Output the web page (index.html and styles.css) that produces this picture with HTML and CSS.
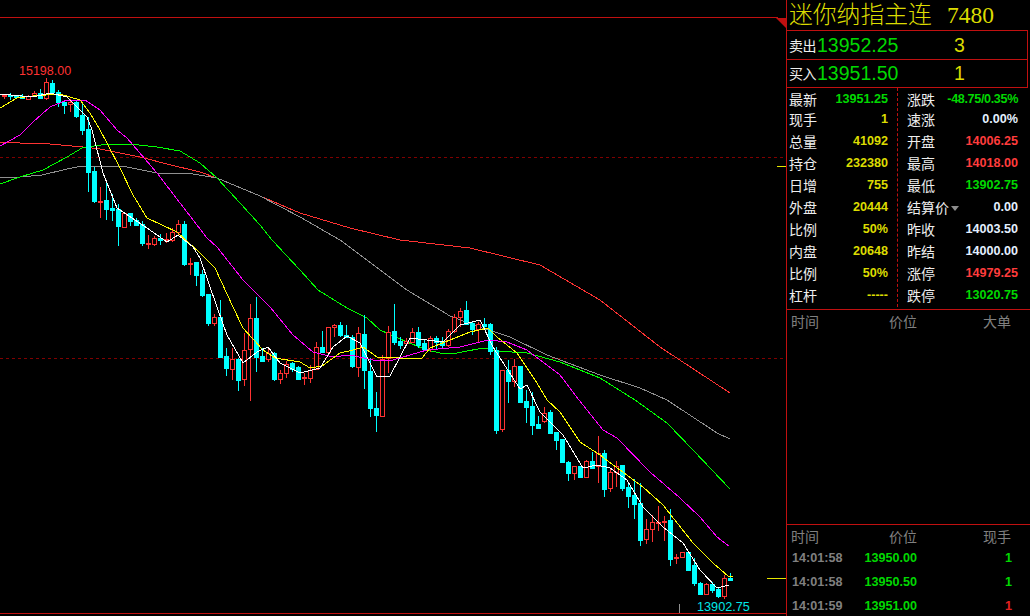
FILE: index.html
```html
<!DOCTYPE html>
<html lang="zh">
<head>
<meta charset="utf-8">
<title>迷你纳指主连</title>
<link rel="stylesheet" href="styles.css">
</head>
<body>
<div class="app">
  <section class="chart">
    <svg id="kline" class="kline" width="786" height="616" viewBox="0 0 786 616">
      <line class="frame" x1="0" y1="17.5" x2="778" y2="17.5"/>
      <polygon class="corner" points="776,18 786,18 786,28"/>
      <line class="grid" x1="0" y1="157.5" x2="786" y2="157.5"/>
      <line class="grid" x1="0" y1="358.5" x2="786" y2="358.5"/>
      <line class="frame" x1="0" y1="613.5" x2="786" y2="613.5"/>
      <line class="tick" x1="777" y1="166.5" x2="786" y2="166.5"/>
      <line class="tick" x1="767" y1="578.5" x2="786" y2="578.5"/>
      <line class="mark" x1="679.5" y1="604" x2="679.5" y2="613"/>
      <text class="hi-label" x="19" y="75">15198.00</text>
      <text class="lo-label" x="697" y="611">13902.75</text>
    </svg>
  </section>
  <aside class="panel">
    <header class="title"><span class="name">迷你纳指主连</span><span class="code">7480</span></header>
    <div class="quote">
      <div class="quote-row"><span class="quote-label">卖出</span><span class="quote-price">13952.25</span><span class="quote-vol">3</span></div>
      <div class="quote-row"><span class="quote-label">买入</span><span class="quote-price">13951.50</span><span class="quote-vol">1</span></div>
    </div>
    <div class="stats">
      <div class="stat-col left">
        <div class="stat"><span>最新</span><b class="green">13951.25</b></div>
        <div class="stat"><span>现手</span><b class="yellow">1</b></div>
        <div class="stat"><span>总量</span><b class="yellow">41092</b></div>
        <div class="stat"><span>持仓</span><b class="yellow">232380</b></div>
        <div class="stat"><span>日增</span><b class="yellow">755</b></div>
        <div class="stat"><span>外盘</span><b class="yellow">20444</b></div>
        <div class="stat"><span>比例</span><b class="yellow">50%</b></div>
        <div class="stat"><span>内盘</span><b class="yellow">20648</b></div>
        <div class="stat"><span>比例</span><b class="yellow">50%</b></div>
        <div class="stat"><span>杠杆</span><b class="yellow">-----</b></div>
      </div>
      <div class="stat-col right">
        <div class="stat"><span>涨跌</span><b class="green tight">-48.75/0.35%</b></div>
        <div class="stat"><span>速涨</span><b class="pale">0.00%</b></div>
        <div class="stat"><span>开盘</span><b class="red">14006.25</b></div>
        <div class="stat"><span>最高</span><b class="red">14018.00</b></div>
        <div class="stat"><span>最低</span><b class="green">13902.75</b></div>
        <div class="stat"><span class="with-caret">结算价<i class="caret"></i></span><b class="pale">0.00</b></div>
        <div class="stat"><span>昨收</span><b class="pale">14003.50</b></div>
        <div class="stat"><span>昨结</span><b class="pale">14000.00</b></div>
        <div class="stat"><span>涨停</span><b class="red">14979.25</b></div>
        <div class="stat"><span>跌停</span><b class="green">13020.75</b></div>
      </div>
    </div>
    <div class="big-orders">
      <div class="list-head"><span>时间</span><span class="num">价位</span><span class="num">大单</span></div>
    </div>
    <div class="ticks">
      <div class="list-head"><span>时间</span><span class="num">价位</span><span class="num">现手</span></div>
      <div class="tick-row"><span class="time">14:01:58</span><b class="num green">13950.00</b><b class="num green">1</b></div>
      <div class="tick-row"><span class="time">14:01:58</span><b class="num green">13950.50</b><b class="num green">1</b></div>
      <div class="tick-row"><span class="time">14:01:59</span><b class="num green">13951.00</b><b class="num red-dark">1</b></div>
    </div>
  </aside>
</div>
<script src="chart.js"></script>
</body>
</html>
```

FILE: styles.css
```css
* { box-sizing: border-box; }
html, body { margin: 0; padding: 0; background: #000; overflow: hidden; }
body { font-family: "Liberation Sans", "Noto Sans CJK SC", sans-serif; color: #eee; }
.app { display: flex; width: 1030px; height: 616px; background: #000; }
.chart { width: 786px; height: 616px; flex: none; }
.kline { display: block; }

.frame { stroke: #c01010; stroke-width: 1; shape-rendering: crispEdges; }
.corner { fill: #c01010; }
.grid { stroke: #800000; stroke-width: 1; stroke-dasharray: 3 3; shape-rendering: crispEdges; }
.tick { stroke: #e6e600; stroke-width: 1; shape-rendering: crispEdges; }
.mark { stroke: #909090; stroke-width: 1; shape-rendering: crispEdges; }
.hi-label { font: 12.5px "Liberation Sans", sans-serif; fill: #ff3232; }
.lo-label { font: 12.7px "Liberation Sans", sans-serif; fill: #00e8e8; }

.ma { fill: none; stroke-width: 1; shape-rendering: crispEdges; }
.ma-white { stroke: #ffffff; }
.ma-yellow { stroke: #ffff00; }
.ma-magenta { stroke: #ff00ff; }
.ma-green { stroke: #00ff00; }
.ma-gray { stroke: #909090; }
.ma-red { stroke: #ff3232; }
.wick-up, .doji { fill: #ff3232; }
.wick-down, .body-down { fill: #00ffff; }
.body-up { fill: #000; stroke: #ff3232; stroke-width: 1; shape-rendering: crispEdges; }
.kline rect { shape-rendering: crispEdges; }

.panel { width: 244px; height: 616px; flex: none; border-left: 1px solid #c01010; display: flex; flex-direction: column; }
.title { height: 30px; flex: none; padding-left: 2px; display: flex; align-items: center; color: #dcdc00; white-space: nowrap; }
.name { font: 300 23.8px/30px "Liberation Sans", "Noto Sans CJK SC", sans-serif; width: 158px; }
.code { font: 23.5px/30px "Liberation Serif", serif; }
.quote { height: 58px; flex: none; margin-right: 2px; border: 1px solid #c01010; border-left: 0; display: flex; flex-direction: column; }
.quote-row { flex: 1; display: grid; grid-template-columns: 28px 110px 1fr; padding-left: 2px; align-items: center; }
.quote-row + .quote-row { border-top: 1px solid #c01010; }
.quote-label { font: 14px/20px "Noto Sans CJK SC", sans-serif; color: #eee; white-space: nowrap; letter-spacing: -0.5px; }
.quote-price { font: 19.5px/24px "Liberation Sans", sans-serif; color: #00d800; }
.quote-vol { font: 19.5px/24px "Liberation Sans", sans-serif; color: #dcdc00; padding-left: 27px; }

.stats { height: 222px; flex: none; display: grid; grid-template-columns: 111px 1fr; border-bottom: 1px solid #c01010; }
.stat-col { display: flex; flex-direction: column; height: 219px; }
.stat-col.left { padding: 0 9px 0 2px; border-right: 1px dashed #c01010; }
.stat-col.right { padding: 0 12px 0 9px; }
.stat { height: 22px; flex: none; display: flex; justify-content: space-between; align-items: center; }
.stat:first-child { height: 20px; padding-top: 1px; }
.stat span { font: 14px/20px "Noto Sans CJK SC", sans-serif; color: #eee; white-space: nowrap; }
.stat b { font: bold 12.6px/20px "Liberation Sans", sans-serif; white-space: nowrap; }
.stat b.tight { letter-spacing: -0.35px; }
.with-caret { display: flex; align-items: center; }
.caret { display: block; width: 0; height: 0; margin: 3px 0 0 2px; border-left: 4.5px solid transparent; border-right: 4.5px solid transparent; border-top: 5px solid #8c8c8c; }
.green { color: #00d800; }
.yellow { color: #dcdc00; }
.red { color: #ff3c3c; }
.red-dark { color: #e02020; }
.pale { color: #e4f0ff; }

.big-orders { flex: 1; }
.list-head { height: 21px; display: grid; grid-template-columns: 73px 53px 1fr; padding: 0 19px 0 4px; align-items: center; font: 14px/20px "Noto Sans CJK SC", sans-serif; color: #808080; }
.ticks { height: 92px; flex: none; border-top: 1px solid #c01010; }
.tick-row { height: 24px; display: grid; grid-template-columns: 72px 53px 1fr; padding: 0 18px 0 5px; align-items: center; font: bold 12.6px/24px "Liberation Sans", sans-serif; }
.time { color: #808080; }
.num { text-align: right; }
```

FILE: chart.js
```js
(function () {
  var NS = "http://www.w3.org/2000/svg";
  var svg = document.getElementById("kline");
  function el(name, attrs) {
    var n = document.createElementNS(NS, name);
    for (var k in attrs) n.setAttribute(k, attrs[k]);
    svg.appendChild(n);
  }
  // [top, bottom, high, low, rising]; x = 4 + 6 * index
  var c = [
    [95,96,94,99,1],[95,96,93,100,0],[96,97,95,98,0],[96,98,94,99,0],[96,99,95,99,1],[93,96,91,97,1],
    [93,98,89,98,0],[82,98,78,100,1],[83,92,80,94,0],[92,102,90,107,0],[102,105,100,114,0],[102,104,99,112,1],
    [102,116,100,118,0],[115,130,103,135,0],[129,172,117,192,0],[171,201,167,203,0],[201,202,187,218,1],[200,209,183,220,0],
    [208,210,194,221,0],[209,226,204,246,0],[213,227,213,227,1],[213,221,213,226,0],[220,225,218,226,0],[224,243,221,246,0],
    [243,244,235,249,1],[238,244,236,246,1],[238,240,234,245,0],[239,240,233,243,1],[232,240,228,242,1],[224,232,220,236,1],
    [224,264,221,266,0],[263,264,258,275,1],[262,275,262,286,0],[274,295,270,297,0],[294,323,294,326,0],[317,323,314,326,1],
    [317,357,300,358,0],[356,368,348,376,0],[359,369,348,380,1],[359,380,358,391,0],[350,379,333,386,1],[318,349,304,401,1],
    [318,357,297,372,0],[356,361,348,362,0],[353,359,347,362,1],[353,379,352,381,0],[373,379,370,384,1],[364,373,361,378,1],
    [363,369,362,372,0],[367,379,366,380,0],[377,378,373,385,1],[370,378,365,383,1],[347,369,342,370,1],[347,352,331,353,0],
    [327,352,327,352,1],[325,327,324,337,1],[325,335,322,337,0],[335,337,325,338,0],[337,366,335,368,0],[333,367,327,377,1],
    [334,370,315,389,0],[371,408,358,417,0],[408,415,392,432,0],[359,416,355,417,1],[332,358,326,373,1],[331,342,304,345,0],
    [341,345,337,349,0],[341,343,338,345,1],[332,342,328,343,1],[332,345,327,348,0],[343,349,340,350,0],[338,349,336,352,1],
    [338,342,336,350,0],[341,345,337,349,0],[331,345,329,347,1],[317,331,314,333,1],[311,317,308,327,1],[310,324,301,325,0],
    [323,329,322,335,0],[324,329,322,343,1],[324,326,318,329,0],[324,351,323,355,0],[350,430,347,434,0],[370,429,370,432,1],
    [370,381,360,403,0],[366,381,359,387,1],[366,402,366,402,0],[401,407,390,423,0],[406,425,392,435,0],[424,428,416,428,0],
    [413,421,407,423,1],[412,433,410,433,0],[432,440,432,450,0],[439,462,439,463,0],[462,473,461,481,0],[466,473,466,480,1],
    [466,477,466,478,0],[461,477,460,477,1],[461,468,452,468,0],[453,466,436,483,1],[453,489,450,497,0],[472,488,468,492,1],
    [466,472,461,487,1],[465,488,465,491,0],[487,496,483,508,0],[495,504,479,519,0],[503,540,483,546,0],[529,539,519,544,1],
    [522,529,515,542,1],[522,523,506,531,1],[521,522,516,541,1],[520,559,509,566,0],[557,558,554,564,1],[552,557,552,557,1],
    [552,570,552,571,0],[565,583,558,586,0],[583,594,582,595,0],[584,594,583,595,1],[584,590,582,593,0],[589,596,587,598,0],
    [578,596,575,599,1],[578,580,573,580,0]
  ];
  var lines = {
    "ma-red": "0,142 20,143 50,144 83,147 100,149 140,157 167,164 200,172 217,178 260,196 300,213 350,228 400,240 470,248 540,265 600,300 660,347 730,393",
    "ma-gray": "0,178 20,177 42,175 67,169 82,166 100,166 127,167 157,173 193,174 217,178 260,196 300,217 340,240 367,260 400,285 407,290 450,316 473,325 510,337 547,355 600,375 640,388 667,400 717,433 730,439",
    "ma-green": "0,184 20,177 43,170 67,157 82,148 107,144 130,144 157,147 180,151 200,163 217,178 240,203 260,225 272,240 300,270 318,290 347,308 367,318 380,330 407,342 427,350 440,353 457,353 483,348 497,351 527,353 560,362 600,378 635,400 667,423 693,450 730,489",
    "ma-magenta": "0,146 20,135 33,122 50,107 67,100 85,100 100,110 117,130 127,138 157,173 180,203 207,238 217,247 243,280 270,307 293,335 313,352 333,357 350,355 373,360 393,360 427,350 460,347 488,340 507,342 527,350 560,375 579,400 603,430 617,438 650,472 680,498 700,517 717,537 729,546",
    "ma-yellow": "0,108 17,98 33,96 60,94 80,100 90,113 100,130 107,143 120,168 133,195 147,218 177,232 200,253 215,268 233,307 243,328 263,350 275,358 300,362 310,368 322,366 340,353 353,350 363,347 377,357 400,358 422,358 430,348 450,340 470,332 488,328 497,337 517,353 537,383 547,400 560,412 580,442 600,455 620,470 643,487 663,505 693,543 713,563 728,576 733,576",
    "ma-white": "0,94 33,97 50,93 67,97 87,117 92,130 103,173 117,208 147,228 167,242 178,235 193,247 200,258 217,307 227,335 243,363 257,352 268,347 280,363 300,373 320,368 333,347 347,336 360,343 377,377 390,376 410,338 443,342 460,325 480,320 493,347 520,389 527,385 540,412 563,435 583,468 597,465 610,468 627,480 643,507 663,527 683,543 700,570 717,588 729,585"
  };
  ["ma-red","ma-gray","ma-green"].forEach(function (k) { el("polyline", { "class": "ma " + k, points: lines[k] }); });
  c.forEach(function (d, i) {
    var x = 4 + 6 * i, t = d[0], b = d[1], h = d[2], l = d[3], up = d[4];
    el("rect", { "class": up ? "wick-up" : "wick-down", x: x, y: h, width: 1, height: l - h });
    if (b - t <= 1) {
      el("rect", { "class": up ? "doji" : "body-down", x: x - 2, y: t, width: 5, height: 2 });
    } else if (up) {
      el("rect", { "class": "body-up", x: x - 1.5, y: t + 0.5, width: 4, height: b - t });
    } else {
      el("rect", { "class": "body-down", x: x - 2, y: t, width: 5, height: b - t + 1 });
    }
  });
  ["ma-magenta","ma-yellow","ma-white"].forEach(function (k) { el("polyline", { "class": "ma " + k, points: lines[k] }); });
})();
```
